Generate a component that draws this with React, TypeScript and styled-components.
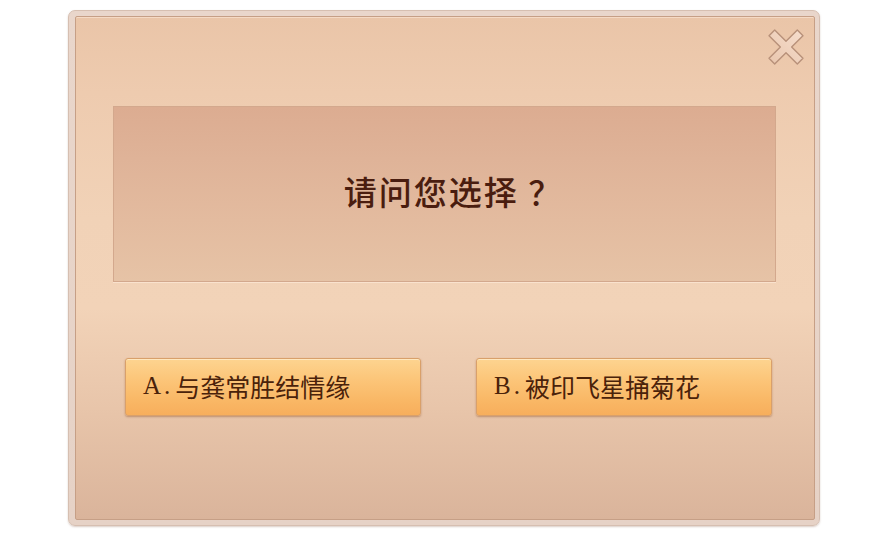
import React from "react";
import styled, { createGlobalStyle } from "styled-components";

const Global = createGlobalStyle`
  html, body { margin: 0; padding: 0; background: #ffffff; }
  body { font-family: "Noto Sans CJK SC", "Noto Sans", sans-serif; }
`;

const Page = styled.div`
  width: 880px;
  height: 543px;
  box-sizing: border-box;
  padding: 10px 0 0 68px;
`;

const Frame = styled.div`
  width: 752px;
  height: 516px;
  box-sizing: border-box;
  padding: 5px 4px 5px 6px;
  display: flex;
  background: linear-gradient(#e9d6cb, #e6d2c6);
  border: 1px solid #d6bfb1;
  border-radius: 7px;
  box-shadow: 0 1px 2px rgba(150, 110, 90, 0.35);
`;

const Panel = styled.div`
  position: relative;
  flex: 1;
  display: flex;
  flex-direction: column;
  box-sizing: border-box;
  padding: 89px 38px 0 37px;
  border: 1px solid #c69f86;
  border-radius: 2px;
  background: linear-gradient(
    180deg,
    #eac5a8 0%,
    #eecbaf 15%,
    #f1d2b7 40%,
    #f2d3b8 58%,
    #e8c5aa 78%,
    #dab49b 100%
  );
  box-shadow: inset 0 1px 0 rgba(255, 240, 225, 0.5);
`;

const Question = styled.div`
  height: 176px;
  box-sizing: border-box;
  display: flex;
  align-items: center;
  justify-content: center;
  border: 1px solid #d3a88d;
  background: linear-gradient(180deg, #dcac91 0%, #dfb398 30%, #e3bb9f 65%, #e6c3a6 100%);
  box-shadow: 0 1px 0 rgba(255, 236, 220, 0.6);
  color: #4a1d0f;
  font-size: 33px;
  font-weight: 500;
  letter-spacing: 2px;
  padding: 0 0 6px 18px;
  white-space: pre;
`;

const Choices = styled.div`
  display: flex;
  gap: 55px;
  margin-top: 76px;
  padding-left: 12px;
`;

const Choice = styled.button`
  width: 296px;
  height: 58px;
  box-sizing: border-box;
  display: flex;
  align-items: center;
  padding: 0 0 2px 17px;
  border: 1px solid #d9a06a;
  border-radius: 3px;
  background: linear-gradient(180deg, #fdd490 0%, #fcc67a 35%, #f9b765 75%, #f7ae5c 100%);
  box-shadow: 0 1px 2px rgba(140, 80, 40, 0.45), inset 0 1px 0 rgba(255, 240, 210, 0.7);
  color: #4a220a;
  font-family: "Noto Sans CJK SC", sans-serif;
  font-size: 25px;
  cursor: pointer;
`;

const Letter = styled.span`
  font-family: "Liberation Serif", "DejaVu Serif", serif;
  font-size: 25px;
  letter-spacing: 3px;
  margin-right: 2px;
`;

const Close = styled.button`
  position: absolute;
  top: 12px;
  right: 10px;
  width: 36px;
  height: 36px;
  padding: 0;
  border: none;
  background: none;
  cursor: pointer;
  svg { display: block; overflow: visible; }
`;

function CloseIcon() {
  return (
    <svg width="36" height="36" viewBox="0 0 36 36">
      <defs>
        <linearGradient id="xg" x1="0" y1="0" x2="0" y2="1">
          <stop offset="0" stopColor="#f5dccb" />
          <stop offset="1" stopColor="#eac8b0" />
        </linearGradient>
      </defs>
      <polygon
        transform="rotate(45 18 18)"
        points="14,-2 22,-2 22,14 38,14 38,22 22,22 22,38 14,38 14,22 -2,22 -2,14 14,14"
        fill="url(#xg)"
        stroke="#b8917a"
        strokeWidth="1.4"
        strokeLinejoin="round"
      />
    </svg>
  );
}

export default function App() {
  return (
    <>
      <Global />
      <Page>
        <Frame>
          <Panel>
            <Close aria-label="关闭">
              <CloseIcon />
            </Close>
            <Question>{"请问您选择 ？"}</Question>
            <Choices>
              <Choice>
                <Letter>A.</Letter>与龚常胜结情缘
              </Choice>
              <Choice>
                <Letter>B.</Letter>被印飞星捅菊花
              </Choice>
            </Choices>
          </Panel>
        </Frame>
      </Page>
    </>
  );
}
